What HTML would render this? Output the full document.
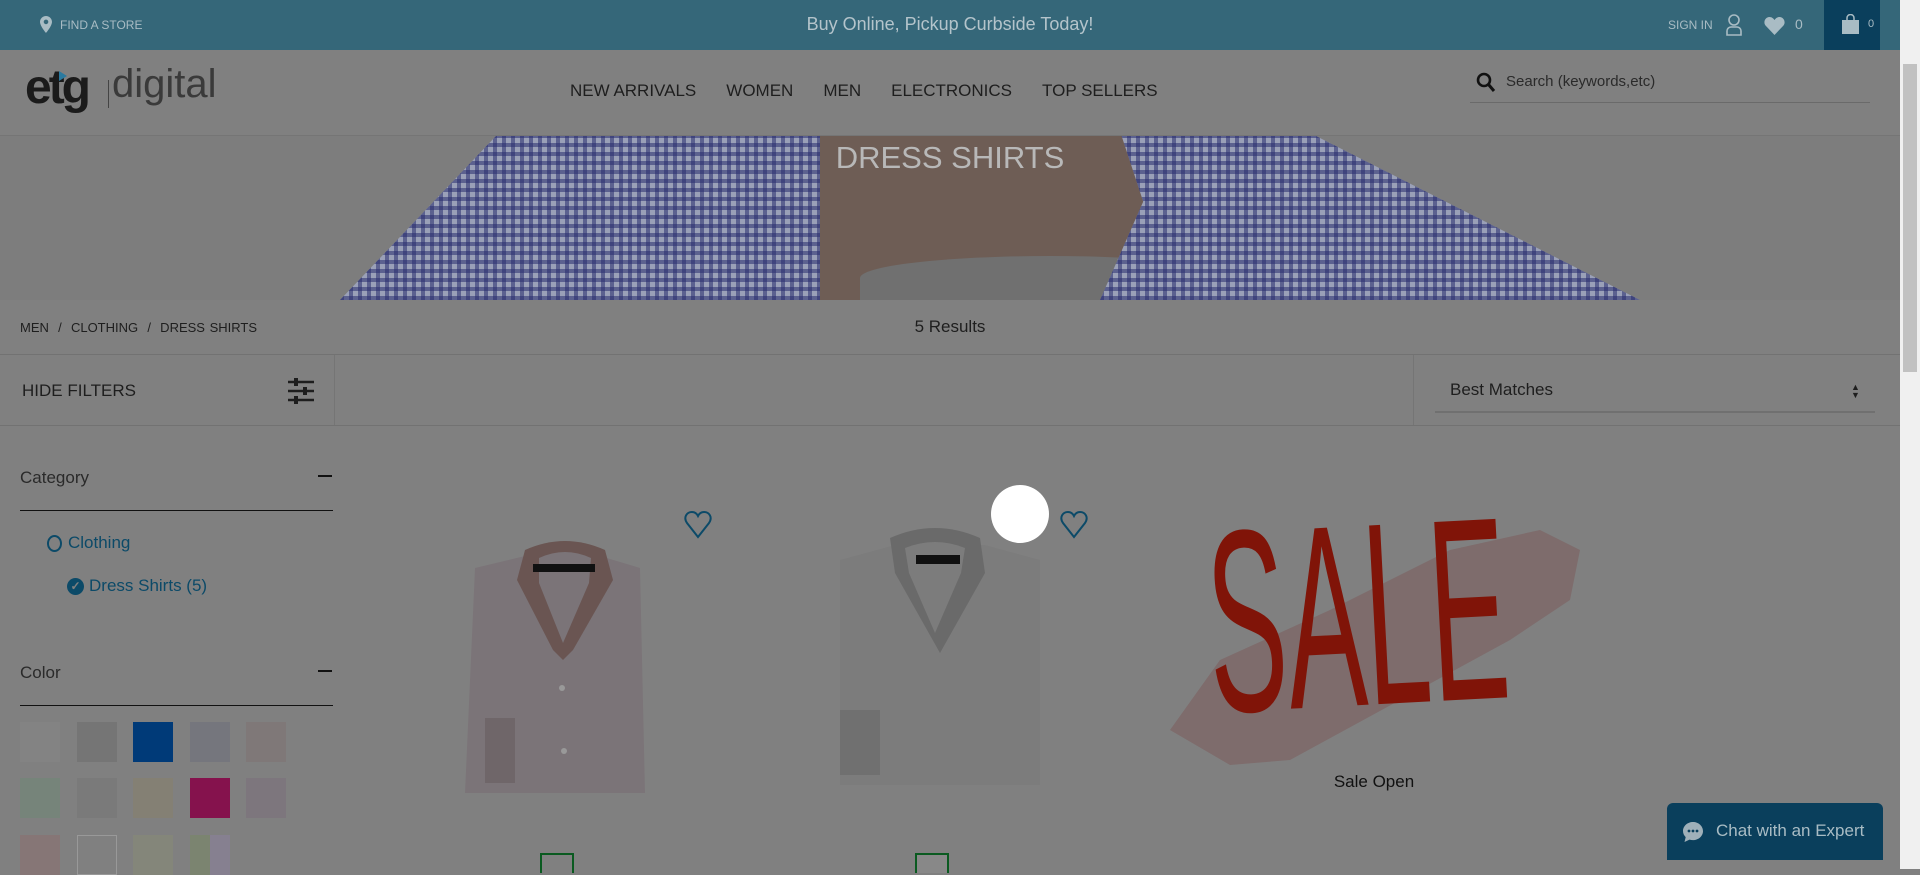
<!DOCTYPE html>
<html><head><meta charset="utf-8"><style>
*{box-sizing:border-box;margin:0;padding:0}
body{width:1920px;height:869px;overflow:hidden;background:#808080;font-family:"Liberation Sans",sans-serif;position:relative;color:#222}
.abs{position:absolute}
.top{left:0;top:0;width:1900px;height:50px;background:#356779;color:#a9bcc4}
.gingham{background-color:#9aa0b8;background-image:repeating-linear-gradient(0deg,rgba(40,45,110,.55) 0 4px,transparent 4px 9px),repeating-linear-gradient(90deg,rgba(40,45,110,.55) 0 4px,transparent 4px 9px)}
.sw{width:40px;height:40px}
.nav span{margin-right:30px}
</style></head><body>
<div class="abs top">
  <svg class="abs" style="left:40px;top:16px" width="12" height="17" viewBox="0 0 12 17"><path d="M6 0C2.7 0 0 2.6 0 5.9 0 10 6 17 6 17s6-7 6-11.1C12 2.6 9.3 0 6 0zm0 8.2a2.3 2.3 0 110-4.6 2.3 2.3 0 010 4.6z" fill="#a9bcc4"/></svg>
  <div class="abs" style="left:60px;top:18px;font-size:12px">FIND A STORE</div>
  <div class="abs" style="left:0;width:1900px;top:14px;text-align:center;font-size:18px;color:#b4c4cb">Buy Online, Pickup Curbside Today!</div>
  <div class="abs" style="left:1668px;top:18px;font-size:12px">SIGN IN</div>
  <svg class="abs" style="left:1726px;top:14px" width="16" height="22" viewBox="0 0 16 22"><circle cx="8" cy="6" r="5" fill="none" stroke="#a9bcc4" stroke-width="1.6"/><path d="M1 21v-4a4 4 0 014-4h6a4 4 0 014 4v4z" fill="none" stroke="#a9bcc4" stroke-width="1.6"/></svg>
  <svg class="abs" style="left:1764px;top:16px" width="21" height="19" viewBox="0 0 21 19"><path d="M10.5 19L1.5 9.5C-1 6.5 1 1 5.5 1c2.3 0 4 1.5 5 3 1-1.5 2.7-3 5-3 4.5 0 6.5 5.5 4 8.5z" fill="#a9bcc4"/></svg>
  <div class="abs" style="left:1795px;top:16px;font-size:14px">0</div>
  <div class="abs" style="left:1824px;top:0;width:56px;height:50px;background:#0a3f5c"></div>
  <svg class="abs" style="left:1842px;top:14px" width="17" height="20" viewBox="0 0 17 20"><path d="M5 6V4a3.5 3.5 0 017 0v2" fill="none" stroke="#a9bcc4" stroke-width="1.5"/><rect x="0" y="6" width="17" height="14" fill="#a9bcc4"/></svg>
  <div class="abs" style="left:1868px;top:18px;font-size:11px">0</div>
</div>
<div class="abs" style="left:1900px;top:0;width:20px;height:869px;background:#f0f0f0"></div>
<div class="abs" style="left:1903px;top:64px;width:14px;height:308px;background:#c1c1c1"></div>
<!-- header -->
<div class="abs" style="left:25px;top:60px;font-size:48px;font-weight:bold;color:#1b1b1b;letter-spacing:-3px">etg</div>
<div class="abs" style="left:59px;top:71px;width:0;height:0;border-left:8px solid #2a7aa0;border-top:5px solid transparent;border-bottom:5px solid transparent"></div>
<div class="abs" style="left:108px;top:80px;width:1px;height:28px;background:#444"></div>
<div class="abs" style="left:112px;top:62px;font-size:40px;color:#3a3a3a">digital</div>
<div class="abs nav" style="left:570px;top:81px;font-size:17px;color:#1e1e1e;white-space:nowrap"><span>NEW ARRIVALS</span><span>WOMEN</span><span>MEN</span><span>ELECTRONICS</span><span>TOP SELLERS</span></div>
<svg class="abs" style="left:1476px;top:72px" width="20" height="21" viewBox="0 0 20 21"><circle cx="8" cy="8" r="6" fill="none" stroke="#111" stroke-width="2.6"/><path d="M12.5 12.5L18 19" stroke="#111" stroke-width="3"/></svg>
<div class="abs" style="left:1506px;top:73px;font-size:15px;color:#2a2a2a">Search (keywords,etc)</div>
<div class="abs" style="left:1470px;top:102px;width:400px;height:1px;background:#6a6a6a"></div>
<div class="abs" style="left:0;top:135px;width:1900px;height:1px;background:#757575"></div>
<!-- hero -->
<div class="abs" style="left:0;top:136px;width:1900px;height:164px;background:#7d7d7d;overflow:hidden">
  <div class="abs gingham" style="left:340px;top:0;width:520px;height:164px;clip-path:polygon(100% 0,30% 0,0 100%,100% 100%)"></div>
  <div class="abs" style="left:820px;top:0;width:420px;height:164px;background:#6e5d55"></div>
  <div class="abs" style="left:860px;top:120px;width:380px;height:44px;background:#707070;border-radius:50% 50% 0 0"></div>
  <div class="abs gingham" style="left:1100px;top:0;width:540px;height:164px;clip-path:polygon(4% 0,40% 0,100% 100%,0 100%,8% 40%)"></div>
  <div class="abs" style="left:0;top:0;width:1900px;text-align:center;top:4px;font-size:31px;color:#b8b8b8">DRESS SHIRTS</div>
</div>
<!-- breadcrumb -->
<div class="abs" style="left:20px;top:320px;font-size:13px;color:#1e1e1e;word-spacing:1px">MEN &nbsp;/&nbsp; CLOTHING &nbsp;/&nbsp; DRESS SHIRTS</div>
<div class="abs" style="left:0;width:1900px;text-align:center;top:317px;font-size:17px;color:#1e1e1e">5 Results</div>
<div class="abs" style="left:0;top:354px;width:1900px;height:1px;background:#727272"></div>
<div class="abs" style="left:22px;top:381px;font-size:17px;color:#1e1e1e">HIDE FILTERS</div>
<svg class="abs" style="left:287px;top:378px" width="28" height="26" viewBox="0 0 28 26"><g stroke="#1e1e1e" stroke-width="2.4"><path d="M1 4h26M1 13h26M1 22h26"/></g><g fill="#1e1e1e"><rect x="7" y="0" width="4" height="8"/><rect x="16" y="9" width="4" height="8"/><rect x="7" y="18" width="4" height="8"/></g></svg>
<div class="abs" style="left:334px;top:355px;width:1px;height:70px;background:#757575"></div>
<div class="abs" style="left:1413px;top:355px;width:1px;height:70px;background:#757575"></div>
<div class="abs" style="left:1450px;top:380px;font-size:17px;color:#1e1e1e">Best Matches</div>
<div class="abs" style="left:1851px;top:383px;font-size:9px;line-height:8px;color:#1e1e1e">▲<br>▼</div>
<div class="abs" style="left:1435px;top:411px;width:440px;height:2px;background:#707070"></div>
<div class="abs" style="left:0;top:425px;width:1900px;height:1px;background:#727272"></div>
<!-- sidebar -->
<div class="abs" style="left:20px;top:468px;font-size:17px;color:#2a2a2a">Category</div>
<div class="abs" style="left:318px;top:475px;width:14px;height:2px;background:#111"></div>
<div class="abs" style="left:20px;top:510px;width:313px;height:1px;background:#111"></div>
<div class="abs" style="left:47px;top:535px;width:15px;height:17px;border:2.5px solid #0c4a68;border-radius:50%"></div>
<div class="abs" style="left:68px;top:533px;font-size:17px;color:#0c4a68">Clothing</div>
<div class="abs" style="left:67px;top:578px;width:17px;height:17px;background:#0c4a68;border-radius:50%;color:#808080;font-size:12px;text-align:center;line-height:17px;font-weight:bold">✓</div>
<div class="abs" style="left:89px;top:576px;font-size:17px;color:#0c4a68">Dress Shirts (5)</div>
<div class="abs" style="left:20px;top:663px;font-size:17px;color:#2a2a2a">Color</div>
<div class="abs" style="left:318px;top:670px;width:14px;height:2px;background:#111"></div>
<div class="abs" style="left:20px;top:705px;width:313px;height:1px;background:#111"></div>
<div class="abs sw" style="left:20px;top:722px;background:#838383"></div>
<div class="abs sw" style="left:77px;top:722px;background:#757575"></div>
<div class="abs sw" style="left:133px;top:722px;background:#003a78"></div>
<div class="abs sw" style="left:190px;top:722px;background:#75767d"></div>
<div class="abs sw" style="left:246px;top:722px;background:#7f7878"></div>
<div class="abs sw" style="left:20px;top:778px;background:#76847a"></div>
<div class="abs sw" style="left:77px;top:778px;background:#7a7a7a"></div>
<div class="abs sw" style="left:133px;top:778px;background:#848074"></div>
<div class="abs sw" style="left:190px;top:778px;background:#85124d"></div>
<div class="abs sw" style="left:246px;top:778px;background:#7d767d"></div>
<div class="abs sw" style="left:20px;top:835px;background:#867676"></div>
<div class="abs sw" style="left:77px;top:835px;background:#808080;border:1px solid #999"></div>
<div class="abs sw" style="left:133px;top:835px;background:#84867a"></div>
<div class="abs sw" style="left:190px;top:835px;background:linear-gradient(90deg,#7b8470 50%,#868090 50%)"></div>
<!-- products -->
<svg class="abs" style="left:455px;top:528px" width="220" height="265" viewBox="0 0 220 265">
<path d="M20 40l50-12 35-0 40 0 40 12 5 225H10z" fill="#7b7478"/>
<path d="M70 22q40-18 80 0l8 30-40 70-10 10-10-10-36-70z" fill="#6a5552"/>
<path d="M84 30q26-12 52 0l-2 25-26 60-24-60z" fill="#7b7478"/>
<rect x="78" y="36" width="62" height="8" fill="#111"/>
<path d="M30 190h30v65H30z" fill="#6f6669"/>
<circle cx="107" cy="160" r="3" fill="#999"/><circle cx="109" cy="223" r="3" fill="#999"/>
</svg>
<svg class="abs" style="left:684px;top:510px" width="28" height="30" viewBox="0 0 28 30"><path d="M14 27L3 13C-1 7 3 2 8 2c3 0 5 2 6 4 1-2 3-4 6-4 5 0 9 5 5 11z" fill="none" stroke="#0c4a68" stroke-width="2"/></svg>
<svg class="abs" style="left:830px;top:510px" width="220" height="280" viewBox="0 0 220 280">
<path d="M10 50l55-15 90 0 55 15 0 225H10z" fill="#7c7c7c"/>
<path d="M60 28q45-20 90 0l5 35-45 80-45-80z" fill="#6a6a6a"/>
<path d="M75 38q30-12 60 0l-4 25-26 60-26-60z" fill="#7c7c7c"/>
<rect x="86" y="45" width="44" height="9" fill="#111"/>
<path d="M10 200h40v65H10z" fill="#707070"/>
</svg>
<div class="abs" style="left:991px;top:485px;width:58px;height:58px;border-radius:50%;background:#fff"></div>
<svg class="abs" style="left:1060px;top:510px" width="28" height="30" viewBox="0 0 28 30"><path d="M14 27L3 13C-1 7 3 2 8 2c3 0 5 2 6 4 1-2 3-4 6-4 5 0 9 5 5 11z" fill="none" stroke="#0c4a68" stroke-width="2"/></svg>
<!-- SALE -->
<svg class="abs" style="left:1160px;top:510px" width="440" height="260" viewBox="0 0 440 260">
<path d="M10 220L60 150 170 100 290 40 380 20 420 40 410 90 350 130 240 190 130 250 70 255z" fill="#7e6c6c"/>
<text x="50" y="195" font-family="Liberation Sans Narrow,Liberation Sans,sans-serif" font-size="260" fill="#801408" textLength="300" lengthAdjust="spacingAndGlyphs" transform="rotate(-3 200 150)">SALE</text>
</svg>
<div class="abs" style="left:1274px;top:772px;width:200px;text-align:center;font-size:17px;color:#111">Sale Open</div>
<div class="abs" style="left:540px;top:853px;width:34px;height:20px;border:2px solid #0a5a20;border-bottom:none"></div>
<div class="abs" style="left:915px;top:853px;width:34px;height:20px;border:2px solid #0a5a20;border-bottom:none;background:#888"></div>
<!-- chat -->
<div class="abs" style="left:1667px;top:803px;width:216px;height:57px;background:#0a3f5c;border-radius:6px 6px 0 0"></div>
<svg class="abs" style="left:1682px;top:821px" width="22" height="22" viewBox="0 0 22 22"><path d="M11 1C5.5 1 1 5 1 10c0 2.4 1 4.5 2.7 6.1L2.5 21l5-2.4c1.1.3 2.3.5 3.5.5 5.5 0 10-4 10-9S16.5 1 11 1z" fill="#9fb0b9"/><circle cx="7" cy="10" r="1.4" fill="#0a3f5c"/><circle cx="11" cy="10" r="1.4" fill="#0a3f5c"/><circle cx="15" cy="10" r="1.4" fill="#0a3f5c"/></svg>
<div class="abs" style="left:1716px;top:821px;font-size:17px;color:#a9bcc4">Chat with an Expert</div>
</body></html>
